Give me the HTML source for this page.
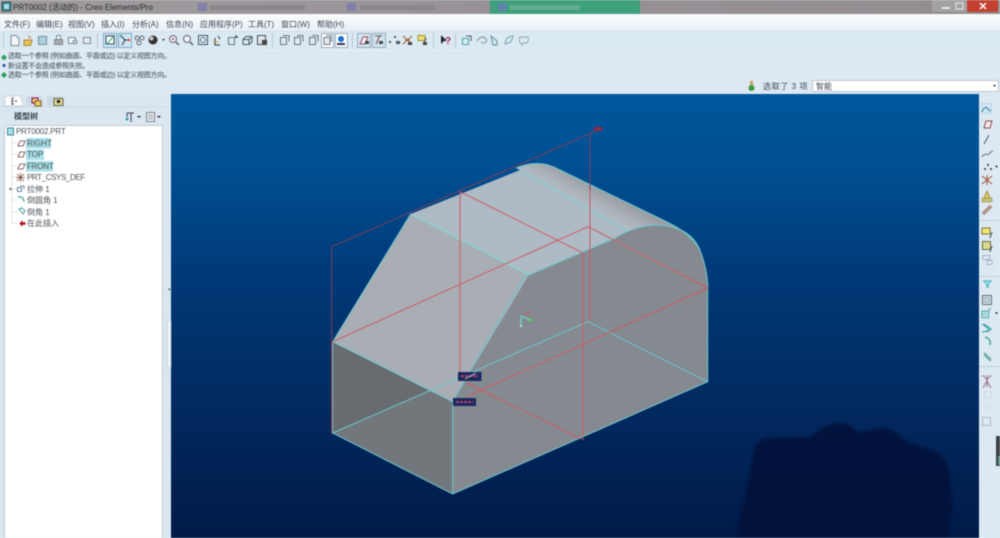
<!DOCTYPE html>
<html><head><meta charset="utf-8"><style>
html,body{margin:0;padding:0;width:1000px;height:538px;overflow:hidden;background:#dce9f2}
#w{position:relative;width:1000px;height:538px;overflow:hidden;filter:blur(.55px)}
svg{position:absolute;left:0;top:0}
.t{position:absolute;white-space:nowrap;font-family:"Liberation Sans","Noto Sans CJK SC",sans-serif;color:#3d4650;font-size:8px;line-height:11px}
.m{font-size:7px;letter-spacing:-.25px}
.r{font-size:8px;color:#4a525a}
</style></head><body><div id="w">
<svg width="1000" height="538" viewBox="0 0 1000 538" fill="none">
<defs>
<linearGradient id="bg" x1="0" y1="0" x2="0" y2="1"><stop offset="0" stop-color="#00589c"/><stop offset=".17" stop-color="#004f92"/><stop offset=".4" stop-color="#003a78"/><stop offset=".7" stop-color="#022a60"/><stop offset="1" stop-color="#011a48"/></linearGradient>
<linearGradient id="tb" x1="0" y1="0" x2="1" y2="0"><stop offset="0" stop-color="#a09c9e"/><stop offset=".5" stop-color="#989296"/><stop offset="1" stop-color="#928d8f"/></linearGradient>
<linearGradient id="mn" x1="0" y1="0" x2="0" y2="1"><stop offset="0" stop-color="#fbfcfe"/><stop offset="1" stop-color="#e7eff6"/></linearGradient>
<linearGradient id="cv" gradientUnits="userSpaceOnUse" x1="575" y1="201" x2="586" y2="181"><stop offset="0" stop-color="#b2bdc6"/><stop offset=".5" stop-color="#a9afb6"/><stop offset="1" stop-color="#9a9ea4"/></linearGradient>
</defs>
<!-- chrome -->
<rect width="1000" height="14" fill="url(#tb)"/>
<rect x="490" y="0" width="150" height="14" fill="#3fa07c"/>
<rect x="347" y="3" width="9" height="8" fill="#8180aa"/><rect x="498" y="3" width="9" height="8" fill="#5f84ac"/><rect x="198" y="3" width="9" height="8" fill="#8180aa"/>
<rect x="360" y="5" width="75" height="5" fill="#8a868c"/><rect x="510" y="5" width="70" height="5" fill="#63ad92"/><rect x="210" y="5" width="95" height="5" fill="#8a868c"/>
<rect x="932" y="0" width="35" height="12" fill="#a5a2a4"/>
<rect x="967" y="0" width="31" height="12" fill="#c24030"/>
<rect x="942" y="7" width="8" height="2" fill="#e8e8e8"/><rect x="956" y="3" width="7" height="6" stroke="#eee"/>
<path d="M980 3l6 6M986 3l-6 6" stroke="#fff" stroke-width="1.500"/>
<rect x="2" y="2" width="9" height="9" fill="#3c7f8c" stroke="#244" stroke-width=".6"/><rect x="4" y="4" width="5" height="5" fill="#a9dfe4"/>
<rect y="14" width="1000" height="17" fill="url(#mn)"/>
<rect y="31" width="1000" height="1" fill="#d3dfe8"/>
<rect y="32" width="1000" height="18" fill="#dbe9f2"/>
<rect y="50" width="1000" height="1" fill="#e6eff5"/>
<rect y="51" width="1000" height="43" fill="#dde9f2"/>
<rect x="0" y="94" width="171" height="444" fill="#dbe7f0"/>
<!-- viewport -->
<rect x="171" y="94" width="808" height="444" fill="url(#bg)"/>
<path d="M736 538L750 473L753 453Q756 440 765 438L810 437Q825 424 840 423Q852 424 857 432L883 428Q895 430 907 442L940 453Q948 462 950 480L953 507L947 538Z" fill="#02123a" opacity=".92" style="filter:blur(1.500px)"/>
<rect x="979" y="94" width="21" height="444" fill="#dde9f2"/>
<!-- model faces -->
<path d="M332.7 341.7L452.7 401.7V494L332.7 433Z" fill="#72777c"/>
<path d="M332.7 341.7L430 391L332.7 433Z" fill="#686c71"/>
<path d="M516 168Q540 158 560 170L668 222.5Q695 236 703 258Q707 270 708 287L657 240L628 231L520 170Z" fill="url(#cv)"/>
<path d="M452.7 401.7L529 275L613 239Q636 225 657 225Q690 226 700 250Q707 268 708 287V381.7L452.7 494Z" fill="#858a90"/>
<path d="M332.7 341.7L410.7 214L529 275L452.7 401.7Z" fill="#a9aeb5"/>
<path d="M410.7 214L520 170L628 231L613 239L529 275Z" fill="#aebac4"/>
<!-- edges -->
<g stroke="#6cc5cc" stroke-width="1">
<path d="M332.7 433L588 321.7L707.7 381.7"/>
<path d="M332.7 341.7V433L452.7 494L707.7 381.7V287"/>
<path d="M332.7 341.7L452.7 401.7"/>
<path d="M332.7 341.7L410.7 214"/>
<path d="M452.7 401.7V494M452.7 401.7L518 288Q522 278 529 275L613 239Q636 225 657 225Q690 226 700 250Q707 268 708 287"/>
<path d="M516 168Q540 158 560 170L668 222.500Q690 233 700 250"/>
<path d="M520 170L628 231" stroke="#7fd0d4" stroke-width="1.200"/>
<path d="M410.7 214L529 275" stroke="#7fd6d8" stroke-width="1.200"/>
<path d="M590 227L708 288" stroke="#8ec9cc" stroke-width=".6"/>
</g>
<!-- datum planes -->
<g stroke="#cf5a62" stroke-width="1">
<path d="M332.7 341.7L588 226.7L708 288"/>
<path d="M708 288L466.7 396.7"/>
<path d="M460 191.7V376"/>
<path d="M460 191.7L583 253V440"/>
<path d="M466.7 383L581 439"/>
</g>
<g stroke="#7c3e5c" stroke-width="1">
<path d="M331.7 246.7L596 131"/>
<path d="M590 133V190"/>
<path d="M331.7 246.7V342"/>
</g>
<path d="M331.7 342V434" stroke="#b04a58"/>
<path d="M590 190V321" stroke="#c75a62"/>
<ellipse cx="598" cy="129" rx="5" ry="2.500" fill="#7c3050"/>
<rect x="458" y="372" width="23.500" height="9" fill="#1c2a60"/><rect x="453" y="398" width="23" height="8" fill="#1c2a60"/>
<path d="M461 376h17M456 402h17" stroke="#b04060" stroke-width="2" stroke-dasharray="3 1"/>
<path d="M465 379L476 373" stroke="#a9aeb5"/>
<!-- csys -->
<path d="M521 326V316M521 316L530 320" stroke="#66e0d0"/><circle cx="530" cy="320" r="1.500" fill="#55dd55"/><path d="M525 315l5-4" stroke="#d85050"/><circle cx="521" cy="326" r="1" fill="#bff"/>
<!-- toolbar separators -->
<g stroke="#b9c6d0"><path d="M3.500 33V48M97.500 33V48M272.500 33V48M352.500 33V48M433.500 33V48M455.500 33V48"/></g>
<!-- toolbar icons -->
<g stroke="#7d8a94" stroke-width="1" fill="#f4f7fa">
<path d="M11 35.500h5l3 3v7h-8z"/>
<path d="M24 40h8l-1.500 5.500H24z" fill="#e8c35a" stroke="#b08b30"/><path d="M28 36l3 2" stroke="#d06030"/>
<rect x="38.500" y="36.500" width="8" height="8" fill="#a9d4dc"/>
<rect x="54.500" y="39.500" width="8" height="5" fill="#aaa"/><rect x="56.500" y="35.500" width="4" height="4"/>
<rect x="68.500" y="37.500" width="7" height="6"/><circle cx="75" cy="42" r="2" fill="#ccd"/>
<rect x="83.500" y="37.500" width="7" height="6" fill="#e5e9ee"/>
</g>
<g>
<rect x="103.500" y="33.500" width="13" height="14" fill="#cfe6f2" stroke="#7fa8c0"/>
<rect x="118.500" y="33.500" width="13" height="14" fill="#cfe6f2" stroke="#7fa8c0"/>
<rect x="321.500" y="33.500" width="12" height="14" fill="#fff" stroke="#9ab"/>
<rect x="335.500" y="33.500" width="12" height="14" fill="#fff" stroke="#9ab"/>
<rect x="357.500" y="33.500" width="13" height="14" fill="#cfe6f2" stroke="#9ab"/>
<rect x="372.500" y="33.500" width="13" height="14" fill="#cfe6f2" stroke="#9ab"/>
<rect x="106" y="36" width="8" height="8" fill="#fff" stroke="#345"/><path d="M107 44l6-7" stroke="#2a7"/>
<path d="M121 36l4 4-3 5M125 40h5" stroke="#334"/><circle cx="121" cy="36" r="1.200" fill="#2a8"/><circle cx="129" cy="40" r="1.200" fill="#d44"/>
<circle cx="137" cy="38" r="2" stroke="#667"/><circle cx="142" cy="38" r="2" stroke="#667"/><circle cx="139" cy="43" r="2" stroke="#667"/>
<circle cx="153" cy="40" r="4.500" fill="#333"/><circle cx="151.500" cy="38.500" r="2" fill="#ccc"/><path d="M162 39h3l-1.500 2z" fill="#333"/>
<circle cx="173" cy="39" r="3.500" stroke="#667" fill="#eef"/><path d="M176 42l3 3" stroke="#556" stroke-width="1.400"/><path d="M171.500 39h3M173 37.500v3" stroke="#c44" stroke-width=".7"/>
<circle cx="187" cy="39" r="3.500" stroke="#667" fill="#eef"/><path d="M190 42l3 3" stroke="#556" stroke-width="1.400"/>
<rect x="198.500" y="35.500" width="9" height="9" stroke="#456"/><circle cx="203" cy="40" r="2.500" stroke="#678"/>
<path d="M215 38v7h5M218 36l2 3" stroke="#234"/><path d="M213 42h6" stroke="#e0a030"/>
<path d="M228.500 37.500h6v7h-6z" stroke="#678"/><path d="M236 35v3M238 37h-3" stroke="#243"/>
<path d="M243 39.500l3-3h6v5l-3 3h-6z" stroke="#456"/><path d="M243 39.500h6v5M249 39.500l3-3" stroke="#456"/>
<rect x="257.500" y="35.500" width="8" height="9" fill="#e0e4e8" stroke="#456"/><rect x="262" y="40" width="5" height="5" fill="#444"/>
<g stroke="#6b7780"><path d="M280.500 37.500h6v7h-6zM283 35.500h6v6M294.500 37.500h6v7h-6zM297 35.500h6v6M309.500 37.500h6v7h-6zM312 35.500h6v6"/><path d="M324 37.500h6v7h-6zM326 35.500h5.500v6.500"/></g>
<rect x="324" y="37.500" width="6" height="7" fill="#e6e9ec" stroke="#678"/>
<circle cx="341" cy="39" r="3" fill="#1c6fd0"/><path d="M337 44h8" stroke="#335" stroke-width="2"/>
<path d="M360 44l3-7h5l-3 7z" stroke="#a05050" fill="#eef"/><rect x="365" y="41" width="4" height="3" fill="#444"/>
<path d="M376 44l4-9" stroke="#904040"/><path d="M375 36h7" stroke="#666"/><rect x="379" y="41" width="4" height="3" fill="#444"/>
<g fill="#555"><rect x="389" y="41" width="2" height="2"/><rect x="394" y="36" width="2" height="2"/><rect x="396" y="41" width="4" height="3"/></g>
<path d="M403 36l9 8M412 36l-9 8M405 40h5" stroke="#a06030"/><rect x="408" y="42" width="4" height="3" fill="#444"/>
<rect x="418" y="35.500" width="7" height="5" fill="#f0e070" stroke="#a09030"/><path d="M426 38l-2 5" stroke="#345"/><rect x="423" y="42" width="4" height="3" fill="#444"/>
<path d="M441 35v9l3-3h3z" fill="#223"/><text x="445" y="44" font-family="Liberation Sans" font-size="10" font-weight="bold" fill="#a02070">?</text>
<g stroke="#46a6a8"><rect x="462.500" y="38.500" width="6" height="6"/><path d="M466 36h5v5" stroke="#556"/>
<path d="M477 41c3-5 7-5 9-2s-2 5-5 3" stroke="#78909c"/><path d="M491 36l6 5v4h-4z" stroke="#60909c"/>
<path d="M505 44c0-5 4-8 8-8l-2 6z" stroke="#70a8b0"/><path d="M520 37h8c1 2 0 6-2 6h-3l-1 2-1-2c-2 0-2-4-1-6z" stroke="#8fa8b4"/></g>
</g>
<!-- message dots -->
<path d="M4 54.500l-3 3L4 60.500l3-3zM4 72l-3 3L4 78l3-3z" fill="#2ca05a"/><circle cx="4" cy="65.500" r="1.500" fill="#2040a0"/>
<!-- status -->
<circle cx="751.500" cy="88" r="3" fill="#3a9a40"/><rect x="750" y="81" width="3" height="4" fill="#c8a060"/>
<rect x="812.500" y="80.500" width="186" height="11" fill="#fff" stroke="#bcc8d2"/>
<path d="M993 85h3l-1.500 2z" fill="#223"/>
<!-- left panel -->
<path d="M5 106V98q0-2 2-2h13l4 10z" fill="#fff" stroke="#c6d3dd"/>
<path d="M26 106V98q0-2 2-2h13l3 10z" fill="#ccdae5"/><path d="M47 106V98q0-2 2-2h13l3 10z" fill="#ccdae5"/>
<path d="M12 98v7M12 98h2M12 101h2M12 104h2" stroke="#556"/><circle cx="16" cy="101" r="1" fill="#678"/>
<rect x="32" y="98" width="6" height="5" fill="#e8d060" stroke="#906"/><rect x="35" y="101" width="6" height="5" fill="#e8d060" stroke="#776020"/>
<rect x="54" y="98.500" width="9" height="7" fill="#e0d890" stroke="#665"/><rect x="57" y="100" width="3" height="3" fill="#222"/>
<path d="M0 107H166" stroke="#c9d6df" stroke-width=".7"/>
<rect x="4.500" y="125.500" width="158" height="420" rx="2" fill="#fff" stroke="#bccad5"/>
<rect x="26" y="138" width="25" height="10.500" fill="#a8dfe6"/><rect x="26" y="149.500" width="18" height="10.500" fill="#a8dfe6"/><rect x="26" y="161" width="27" height="10.500" fill="#a8dfe6"/>
<rect x="7.500" y="128" width="6" height="7" fill="#a8e0e6" stroke="#3a8a9a"/>
<g stroke="#b8c0c8" stroke-width=".8" stroke-dasharray="1 1"><path d="M12 136V224M12 143h5M12 154h5M12 166h5M12 177h5M12 189h5M12 200h5M12 212h5M12 223h5"/></g>
<g stroke="#6b4040" stroke-width=".8"><path d="M18 146l2-5h5l-2 5zM18 157l2-5h5l-2 5zM18 169l2-5h5l-2 5z"/></g>
<path d="M17 174l7 7M24 174l-7 7M20.500 173v9M16 177.500h9" stroke="#805040" stroke-width=".8"/>
<rect x="17.500" y="187.500" width="4" height="4" stroke="#468" stroke-width=".8"/><path d="M20 186h4v3" stroke="#567" stroke-width=".8"/>
<path d="M18 197c3-1 6 1 6 5" stroke="#40a090" stroke-width="1.200"/><path d="M19 209l3-1 3 3-2 3z" stroke="#50a0a0" stroke-width="1"/>
<path d="M20 223.500l2-2v1.200h3v1.600h-3v1.200z" fill="#b01020" stroke="#b01020"/>
<path d="M9 189h3" stroke="#778"/><path d="M10.500 187.500v3" stroke="#778"/>
<path d="M127 113h7M131 113v9M127 113v4" stroke="#557" stroke-width="1.200"/><circle cx="127" cy="119" r="1.500" fill="#3a9"/><path d="M137 116h4l-2 2z" fill="#223"/>
<rect x="146.500" y="112.500" width="8" height="9" stroke="#78838c" fill="#f4f7f9"/><path d="M148 115h5M148 117h5M148 119h5" stroke="#99a"/><path d="M157 116h4l-2 2z" fill="#223"/>
<!-- sash -->
<rect x="167" y="320" width="4" height="48" fill="#eef3f7" stroke="#b4c2cc" stroke-width=".6"/>
<path d="M168 289l2-1v3z" fill="#456"/>
<!-- right toolbar -->
<g stroke="#c2cfd8"><path d="M979 220.500H1000M979 276.500H1000M979 366.500H1000"/></g>
<rect x="981.500" y="103.500" width="10" height="10" fill="#cfe6f2" stroke="#a8c8d8" stroke-width=".5"/>
<path d="M982 112c2-6 5-5 6-3s2 2 3 1" stroke="#3a80a0"/>
<path d="M984 128l2-7h6l-2 7z" fill="#f1ecec" stroke="#904848"/>
<path d="M984 144l5-9" stroke="#555"/>
<path d="M982 157c3-5 5-1 7-3s2-3 4-3" stroke="#707070"/>
<g fill="#555"><rect x="987" y="164" width="2" height="2"/><rect x="984" y="168" width="2" height="2"/><rect x="990" y="168" width="2" height="2"/></g><circle cx="996.500" cy="166.500" r="1" fill="#222"/>
<path d="M982 176l10 8M992 176l-10 8M987 175v10" stroke="#a05038"/>
<path d="M987 191l-3 7h6z" fill="#e8d070" stroke="#a09040"/><rect x="982" y="198" width="10" height="4" fill="#c8c070" stroke="#808040" stroke-width=".5"/>
<path d="M983 214l8-8" stroke="#8a5040" stroke-width="3"/><path d="M983 214l8-8" stroke="#e8d8c0"/>
<rect x="982" y="228" width="8" height="6" fill="#f0e878" stroke="#807830"/><path d="M992 232l-2 6" stroke="#345"/>
<rect x="982.500" y="241.500" width="8" height="8" fill="#d8d890" stroke="#707040"/><path d="M992 246l-2 6" stroke="#345"/>
<path d="M983 255.500h7v4h-7zM987 260.500h5v4h-5z" stroke="#a8b4c4"/>
<path d="M983 281h9M985 281l2 4v3M990 281l-2 4v3" stroke="#58c0c8" stroke-width="1.400"/>
<rect x="982.500" y="295.500" width="9" height="9" fill="#d4dde4" stroke="#607078"/><rect x="985" y="298" width="4" height="4" stroke="#8aa"/>
<path d="M982 318v-7h6l3-3" stroke="#50a0a0"/><rect x="982" y="311" width="7" height="7" fill="#a8dadc" stroke="#50a0a0" stroke-width=".6"/><circle cx="996.500" cy="313" r="1" fill="#222"/>
<path d="M982 324l6 4v3l-6 1M984 324l7 5-4 3" stroke="#3aa8a8" stroke-width="1.300"/>
<path d="M985 337c4 1 6 4 5 8" stroke="#50a890" stroke-width="1.600"/><path d="M985 353l6 6-1 2-6-6z" fill="#88c0b8" stroke="#509890" stroke-width=".7"/>
<path d="M982 376h2l3 4 3-4h2M987 375v12M983 388l4-7 4 7" stroke="#a07088"/>
<rect x="984.500" y="391.500" width="7" height="7" stroke="#d0d8e0"/><rect x="985" y="404" width="5" height="5" stroke="#d8dfe6"/>
<rect x="982.500" y="417.500" width="8" height="8" stroke="#aeb9c4"/>
<rect x="996" y="436" width="4" height="30" fill="#3a4046"/><rect x="998" y="456" width="2" height="9" fill="#5a9a80"/>
</svg>
<!-- text -->
<div class="t" style="left:13px;top:2px;font-size:8px;color:#26282c">PRT0002 (活动的) - Creo Elements/Pro</div>
<div class="t" style="left:4px;top:19px">文件(F)</div>
<div class="t" style="left:36px;top:19px">编辑(E)</div>
<div class="t" style="left:68px;top:19px">视图(V)</div>
<div class="t" style="left:101px;top:19px">插入(I)</div>
<div class="t" style="left:132px;top:19px">分析(A)</div>
<div class="t" style="left:166px;top:19px">信息(N)</div>
<div class="t" style="left:200px;top:19px">应用程序(P)</div>
<div class="t" style="left:248px;top:19px">工具(T)</div>
<div class="t" style="left:281px;top:19px">窗口(W)</div>
<div class="t" style="left:317px;top:19px">帮助(H)</div>
<div class="t m" style="left:8px;top:51px">选取一个参照 (例如曲面、平面或边) 以定义视图方向。</div>
<div class="t m" style="left:8px;top:61px">新设置不会造成参照失败。</div>
<div class="t m" style="left:8px;top:70px">选取一个参照 (例如曲面、平面或边) 以定义视图方向。</div>
<div class="t" style="left:763px;top:81px;letter-spacing:.6px">选取了 3 项</div>
<div class="t" style="left:816px;top:81px">智能</div>
<div class="t" style="left:14px;top:111px;font-weight:bold">模型树</div>
<div class="t r" style="left:16px;top:126px;letter-spacing:-.2px">PRT0002.PRT</div>
<div class="t r" style="left:27px;top:138px">RIGHT</div>
<div class="t r" style="left:27px;top:149px">TOP</div>
<div class="t r" style="left:27px;top:161px;letter-spacing:-.2px">FRONT</div>
<div class="t r" style="left:27px;top:172px;letter-spacing:-.4px">PRT_CSYS_DEF</div>
<div class="t r" style="left:27px;top:184px">拉伸 1</div>
<div class="t r" style="left:27px;top:195px">倒圆角 1</div>
<div class="t r" style="left:27px;top:207px">倒角 1</div>
<div class="t r" style="left:27px;top:218px">在此插入</div>
</div></body></html>
